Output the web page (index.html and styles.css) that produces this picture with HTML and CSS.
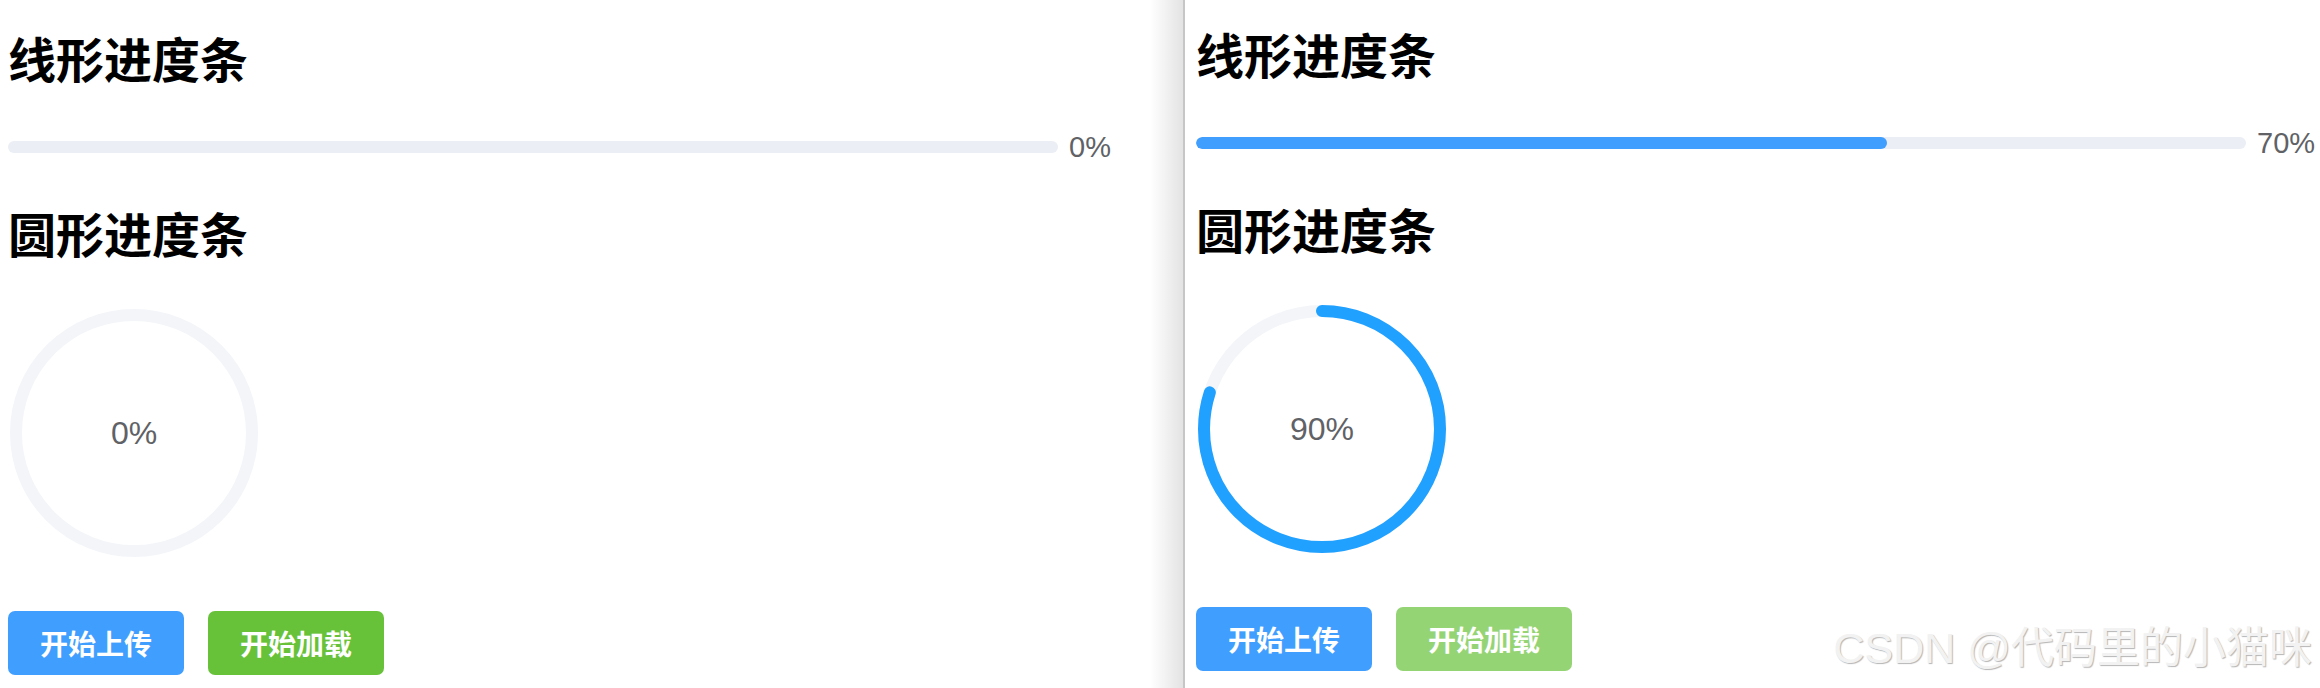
FILE: index.html
```html
<!DOCTYPE html>
<html lang="zh-CN">
<head>
    <meta charset="UTF-8">
    <meta name="viewport" content="width=device-width, initial-scale=1.0">
    <title>进度条</title>
    <link rel="stylesheet" href="styles.css">
</head>
<body>

    <div class="screen">
        <section class="pane pane-left">
            <h2 class="title">线形进度条</h2>
            <div class="line-row">
                <div class="track"><div class="fill" style="width: 0%"></div></div>
                <span class="line-text">0%</span>
            </div>

            <h2 class="title">圆形进度条</h2>
            <div class="ring">
                <svg class="ring-svg" width="248" height="248" viewBox="0 0 248 248">
                    <circle class="ring-track" cx="124" cy="124" r="118"></circle>
                </svg>
                <span class="ring-text">0%</span>
            </div>

            <div class="actions">
                <button class="btn btn-primary">开始上传</button>
                <button class="btn btn-success">开始加载</button>
            </div>
        </section>

        <div class="shade"></div>
        <div class="edge"></div>

        <section class="pane pane-right">
            <h2 class="title">线形进度条</h2>
            <div class="line-row">
                <div class="track"><div class="fill" style="width: 65.8%"></div></div>
                <span class="line-text">70%</span>
            </div>

            <h2 class="title">圆形进度条</h2>
            <div class="ring">
                <svg class="ring-svg" width="248" height="248" viewBox="0 0 248 248">
                    <circle class="ring-track" cx="124" cy="124" r="118"></circle>
                    <!-- dash = 80% of 2*pi*118 -->
                    <circle class="ring-bar" cx="124" cy="124" r="118"
                            stroke-dasharray="593.1 741.4"
                            transform="rotate(-90 124 124)"></circle>
                </svg>
                <span class="ring-text">90%</span>
            </div>

            <div class="actions">
                <button class="btn btn-primary">开始上传</button>
                <button class="btn btn-success is-disabled">开始加载</button>
            </div>
        </section>

        <div class="watermark">CSDN @代码里的小猫咪</div>
    </div>

</body>
</html>
```

FILE: styles.css
```css
body {
    margin: 0;
    background: #fff;
    font-family: "Liberation Sans", "Noto Sans CJK SC", sans-serif;
    overflow: hidden;
}
.screen {
    position: relative;
    display: flex;
    height: 688px;
}
.pane {
    display: flex;
    flex-direction: column;
    align-items: flex-start;
}
.pane-left {
    width: 1142px;
    padding: 33px 0 0 8px;
}
.pane-right {
    flex: 1;
    padding: 29px 0 0 11px;
}
.shade {
    width: 33px;
    background: linear-gradient(to right, rgba(0, 0, 0, 0), rgba(0, 0, 0, 0.11));
}
.edge {
    width: 2px;
    background: #c6c6c6;
}
.title {
    margin: 0;
    font-family: "Noto Sans CJK SC", sans-serif;
    font-size: 48px;
    line-height: 48px;
    font-weight: bold;
    color: #000;
}
.line-row {
    display: flex;
    align-items: center;
    gap: 11px;
    height: 30px;
    margin: 51px 0 46px;
}
.track {
    width: 1050px;
    height: 12px;
    border-radius: 6px;
    background: #ebeef5;
    overflow: hidden;
}
.fill {
    height: 100%;
    border-radius: 6px;
    background: #409eff;
}
.line-text {
    font-size: 29px;
    line-height: 30px;
    color: #606266;
}
.ring {
    display: grid;
    place-items: center;
    width: 248px;
    height: 248px;
    margin: 53px 0 54px 2px;
}
.ring-svg, .ring-text {
    grid-area: 1 / 1;
}
.ring-svg {
    display: block;
}
.ring-track, .ring-bar {
    fill: none;
    stroke-width: 12;
}
.ring-track {
    stroke: #f3f5f9;
}
.ring-bar {
    stroke: #20a0ff;
    stroke-linecap: round;
}
.ring-text {
    font-size: 32px;
    color: #606266;
}
.actions {
    display: flex;
    gap: 24px;
}
.btn {
    width: 176px;
    height: 64px;
    border: none;
    border-radius: 7px;
    font-family: "Noto Sans CJK SC", sans-serif;
    font-size: 28px;
    font-weight: 600;
    color: #fff;
    padding: 0;
}
.btn-primary {
    background: #409eff;
}
.btn-success {
    background: #67c23a;
}
.btn-success.is-disabled {
    background: #95d475;
}
.watermark {
    position: absolute;
    right: 8px;
    bottom: 16px;
    font-size: 43px;
    line-height: 48px;
    color: #f2f2f2;
    text-shadow: 1px 1px 1px #b5b5b5;
    white-space: nowrap;
}
```
